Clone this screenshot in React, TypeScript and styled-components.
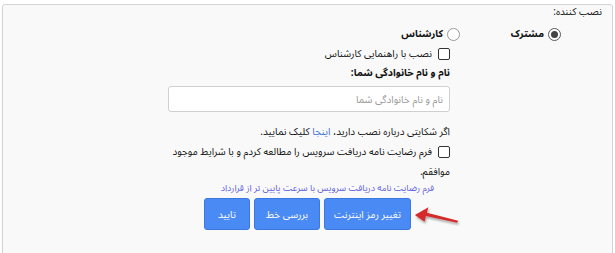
import React from 'react';
import styled, { createGlobalStyle } from 'styled-components';

const FONT = '"Noto Sans Arabic", "DejaVu Sans", Tahoma, sans-serif';

const GlobalStyle = createGlobalStyle`
  html, body {
    margin: 0;
    padding: 0;
    background: #ffffff;
  }
  body {
    font-family: ${FONT};
    font-size: 10px;
    color: #111;
  }
`;

const Page = styled.div`
  padding: 4px 2px 0 2px;
  height: 249px;
  overflow: hidden;
`;

const Panel = styled.div`
  direction: rtl;
  height: 260px;
  background: #f9f9f9;
  border: 1px solid #d3d3d3;
  border-radius: 3px 3px 0 0;
`;

const Title = styled.div`
  padding-right: 10px;
  height: 14px;
  line-height: 14px;
`;

const RadioRow = styled.div`
  display: grid;
  grid-template-columns: 101px auto;
  padding-right: 51px;
  margin-top: 7px;
  height: 16px;
  align-items: center;
`;

const Option = styled.label`
  display: flex;
  align-items: center;
  gap: 4px;
  font-weight: bold;
  line-height: 16px;
`;

const Radio = styled.span<{ checked?: boolean }>`
  width: 11px;
  height: 11px;
  border-radius: 50%;
  border: 1px solid ${p => (p.checked ? '#5a5a5a' : '#9a9a9a')};
  background: #fff;
  display: flex;
  align-items: center;
  justify-content: center;
  &::after {
    content: '';
    width: 7px;
    height: 7px;
    border-radius: 50%;
    background: ${p => (p.checked ? '#444' : 'transparent')};
  }
`;

const Content = styled.div`
  width: 282px;
  margin-right: 162px;
  display: flex;
  flex-direction: column;
`;

const CheckRow = styled.label<{ top: number }>`
  display: flex;
  align-items: center;
  gap: 6px;
  margin-top: ${p => p.top}px;
  line-height: 17px;
  white-space: nowrap;
`;

const Box = styled.span`
  flex-shrink: 0;
  width: 10px;
  height: 10px;
  border: 1px solid #333;
  border-radius: 2px;
  background: #fff;
`;

const FieldLabel = styled.div`
  margin-top: 2px;
  font-weight: bold;
  line-height: 17px;
`;

const Input = styled.input`
  margin-top: 5px;
  box-sizing: border-box;
  width: 282px;
  height: 26px;
  border: 1px solid #d0d0d0;
  border-radius: 3px;
  background: #fff;
  direction: rtl;
  padding: 0 6px;
  font-family: ${FONT};
  font-size: 10px;
  &::placeholder {
    color: #999;
  }
`;

const Paragraph = styled.div<{ top: number }>`
  margin-top: ${p => p.top}px;
  line-height: 17px;
`;

const Link = styled.a`
  color: #3d6fd9;
  text-decoration: none;
`;

const ContractLink = styled.a`
  display: block;
  margin-top: 2px;
  margin-right: 16px;
  color: #5c5ce0;
  font-size: 9px;
  line-height: 14px;
  white-space: nowrap;
  text-decoration: none;
`;

const ButtonRow = styled.div`
  position: relative;
  display: flex;
  gap: 4px;
  margin-top: 2px;
  margin-right: 39px;
`;

const Button = styled.button<{ w: number }>`
  width: ${p => p.w}px;
  height: 32px;
  background: #4a8af5;
  border: 1px solid #3a78e0;
  border-radius: 3px;
  color: #fff;
  font-family: ${FONT};
  font-size: 10px;
  padding: 0;
`;

const Arrow = styled.svg`
  position: absolute;
  right: -50px;
  top: 7px;
  width: 48px;
  height: 22px;
`;

export default function App() {
  return (
    <>
      <GlobalStyle />
      <Page>
        <Panel>
          <Title>نصب کننده:</Title>
          <RadioRow>
            <Option>
              <Radio checked />
              مشترک
            </Option>
            <Option>
              <Radio />
              کارشناس
            </Option>
          </RadioRow>
          <Content>
            <CheckRow top={3}>
              <Box />
              نصب با راهنمایی کارشناس
            </CheckRow>
            <FieldLabel>نام و نام خانوادگی شما:</FieldLabel>
            <Input placeholder='نام و نام خانوادگی شما' />
            <Paragraph top={11}>
              اگر شکایتی درباره نصب دارید، <Link>اینجا</Link> کلیک نمایید.
            </Paragraph>
            <CheckRow top={3}>
              <Box />
              فرم رضایت نامه دریافت سرویس را مطالعه کردم و با شرایط موجود
            </CheckRow>
            <Paragraph top={3}>موافقم.</Paragraph>
            <ContractLink>
              فرم رضایت نامه دریافت سرویس با سرعت پایین تر از قرارداد
            </ContractLink>
            <ButtonRow>
              <Button w={87}>تغییر رمز اینترنت</Button>
              <Button w={66}>بررسی خط</Button>
              <Button w={46}>تایید</Button>
              <Arrow viewBox='0 0 50 22'>
                <defs>
                  <filter id='sh' x='-20%' y='-40%' width='150%' height='200%'>
                    <feDropShadow dx='1' dy='2' stdDeviation='1.2' floodColor='#000' floodOpacity='0.35' />
                  </filter>
                </defs>
                <path
                  d='M2 10 L16 2 L14.5 7.5 L47 16 L46 18 L13.5 11 L12 17 Z'
                  fill='#d42a2a'
                  filter='url(#sh)'
                />
              </Arrow>
            </ButtonRow>
          </Content>
        </Panel>
      </Page>
    </>
  );
}
